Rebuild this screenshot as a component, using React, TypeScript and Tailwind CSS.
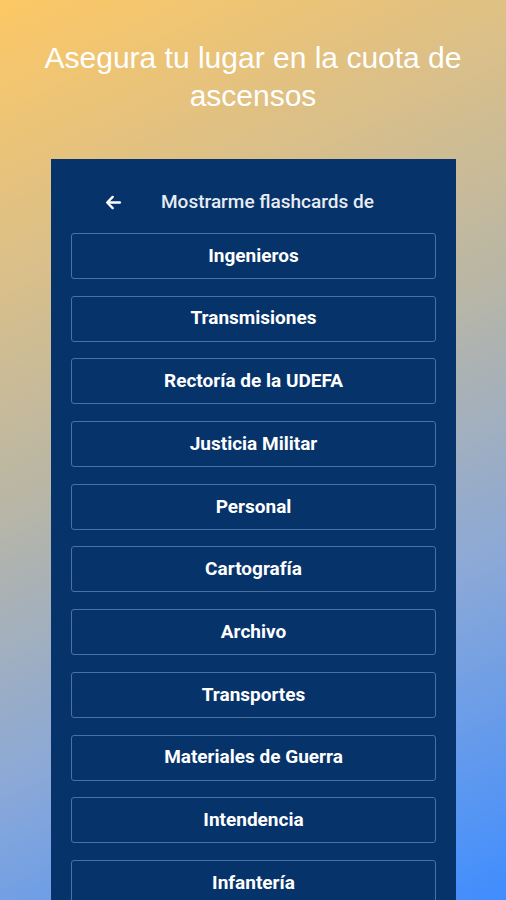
import React from "react";

const items = [
  "Ingenieros",
  "Transmisiones",
  "Rectoría de la UDEFA",
  "Justicia Militar",
  "Personal",
  "Cartografía",
  "Archivo",
  "Transportes",
  "Materiales de Guerra",
  "Intendencia",
  "Infantería",
];

export default function App() {
  return (
    <div
      className="w-[506px] h-[900px] overflow-hidden"
      style={{
        background:
          "linear-gradient(155deg, #fdc865 0%, #d9bf8a 25%, #b8b6a6 45%, #8aa8d8 70%, #3f8dff 100%)",
      }}
    >
      <div className="pt-[39px] px-2 text-center text-white text-[30px] leading-[38px] font-['Liberation_Sans',Arial,sans-serif]">
        Asegura tu lugar en la cuota de
        <br />
        ascensos
      </div>
      <div className="mt-[44px] ml-[51px] w-[405px] bg-[#06336a] pb-10 font-['Roboto',sans-serif]">
        <div className="pt-[29px] h-[28px] box-content flex items-center">
          <svg
            className="ml-[53px]"
            width="19"
            height="19"
            viewBox="0 0 24 24"
            fill="none"
            stroke="#ffffff"
            strokeWidth="3"
            strokeLinecap="round"
            strokeLinejoin="round"
          >
            <path d="M20 12H5" />
            <path d="M11 5l-7 7 7 7" />
          </svg>
          <span className="ml-[38px] text-[19px] font-medium text-[#e8ecf3]">
            Mostrarme flashcards de
          </span>
        </div>
        <div className="mt-[17px] px-5 flex flex-col gap-[16.7px]">
          {items.map((t) => (
            <div
              key={t}
              className="h-[46px] shrink-0 rounded-[3px] border border-[#4b70a4] flex items-center justify-center text-white text-[19px] font-bold"
            >
              {t}
            </div>
          ))}
        </div>
      </div>
    </div>
  );
}
